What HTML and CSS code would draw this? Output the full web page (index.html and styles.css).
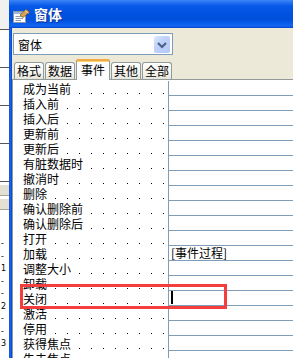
FILE: index.html
```html
<!DOCTYPE html>
<html lang="zh-CN">
<head>
  <meta charset="UTF-8" />
  <meta name="viewport" content="width=device-width, initial-scale=1.0" />
  <title>窗体 属性</title>
  <link rel="stylesheet" href="styles.css">
</head>
<body>
<div class="screen">
  <!-- 后面的设计视图标尺 -->
  <div class="ruler">
    <div class="ruler-top"></div>
    <div class="ruler-band"></div>
    <div class="ruler-band"></div>
    <div class="ruler-band"></div>
    <div class="ruler-band"></div>
    <div class="ruler-section"></div>
    <div class="ruler-section"></div>
    <div class="ruler-ticks">
      <span>-</span><span>-</span><span>1</span><span>-</span><span>-</span>
      <span>2</span><span>-</span><span>-</span><span>3</span>
    </div>
  </div>

  <div class="window">
    <div class="titlebar">
      <svg class="app-icon" width="17" height="14" viewBox="0 0 17 14">
        <rect x="0.5" y="2.5" width="12" height="11" fill="#fff" stroke="#8a97a8"/>
        <rect x="1" y="3" width="11" height="2" fill="#9fb6d8"/>
        <line x1="2.5" y1="7.5" x2="10" y2="7.5" stroke="#8f9aa8"/>
        <line x1="2.5" y1="9.5" x2="10" y2="9.5" stroke="#8f9aa8"/>
        <line x1="2.5" y1="11.5" x2="8" y2="11.5" stroke="#8f9aa8"/>
        <path d="M7 6 L13 0.5 L16.5 3 L10 8.5 Z" fill="#d9a456" stroke="#8a5a1e" stroke-width="0.8"/>
        <path d="M12 1.5 L15.5 4" stroke="#f5d79a" stroke-width="1"/>
      </svg>
      <span class="title">窗体</span>
    </div>

    <div class="body">
      <div class="frame-left"></div>
      <div class="client">
        <div class="combo">
          <span class="combo-text">窗体</span>
          <span class="combo-btn">
            <svg width="16" height="17" viewBox="0 0 16 17">
              <path d="M4 7 L8 11 L12 7" fill="none" stroke="#4d6185" stroke-width="2.2"/>
            </svg>
          </span>
        </div>

        <div class="tabs">
          <div class="tab">格式</div>
          <div class="tab">数据</div>
          <div class="tab active">事件</div>
          <div class="tab">其他</div>
          <div class="tab">全部</div>
        </div>

        <div class="grid" id="grid"></div>
      </div>
    </div>
  </div>
</div>

<script>
  const props = [
    ["成为当前", ""], ["插入前", ""], ["插入后", ""], ["更新前", ""],
    ["更新后", ""], ["有脏数据时", ""], ["撤消时", ""], ["删除", ""],
    ["确认删除前", ""], ["确认删除后", ""], ["打开", ""], ["加载", "[事件过程]"],
    ["调整大小", ""], ["卸载", ""], ["关闭", ""], ["激活", ""],
    ["停用", ""], ["获得焦点", ""], ["失去焦点", ""]
  ];

  const grid = document.getElementById("grid");
  props.forEach(([name, value]) => {
    const row = document.createElement("div");
    row.className = "row";
    row.innerHTML = `<div class="label"><span>${name}</span></div><div class="value">${value}</div>`;
    if (name === "关闭") {
      row.classList.add("current");
      row.querySelector(".value").innerHTML = '<i class="caret"></i>';
      const mark = document.createElement("div");
      mark.className = "highlight";
      row.appendChild(mark);
    }
    grid.appendChild(row);
  });
</script>
</body>
</html>
```

FILE: styles.css
```css
body {
  margin: 0;
  font-family: "Noto Sans CJK SC", "DejaVu Sans", sans-serif;
  font-size: 12px;
  color: #000;
  background: #fff;
}
.screen {
  display: flex;
  width: 293px;
  height: 358px;
  overflow: hidden;
}

/* 左侧标尺 */
.ruler {
  width: 9px;
  flex: none;
  display: flex;
  flex-direction: column;
  background: #fff;
  font-family: "DejaVu Sans", sans-serif;
  font-size: 8px;
  line-height: 1;
}
.ruler-top {
  height: 30px;
  background: #f1f1ef;
  border-bottom: 1px solid #555;
  box-sizing: border-box;
}
.ruler-band {
  height: 38px;
  border-bottom: 1px solid #555;
  box-sizing: border-box;
}
.ruler-section {
  height: 12px;
  margin-top: 2px;
  background: #e4e1d4;
  border-top: 1px solid #fff;
  border-bottom: 1px solid #a8a594;
  box-sizing: border-box;
}
.ruler-ticks {
  display: flex;
  flex-direction: column;
  gap: 4.5px;
  padding-top: 30px;
  padding-left: 1px;
}

/* 窗口 */
.window {
  flex: 1;
  display: flex;
  flex-direction: column;
}
.titlebar {
  height: 28px;
  flex: none;
  display: flex;
  align-items: center;
  padding-left: 4px;
  background: linear-gradient(#3d86f7 0, #1f6ef2 3px, #0758e6 6px, #0052e0 14px, #0050dc 20px, #0a5fee 24px, #1465f0 26px, #0444c9 28px);
}
.app-icon {
  margin-top: 4px;
}
.title {
  margin-left: 4px;
  color: #fff;
  font-weight: bold;
  font-size: 14px;
  text-shadow: 1px 1px 0 #0a2a8a;
}
.body {
  flex: 1;
  display: flex;
}
.frame-left {
  width: 3px;
  background: linear-gradient(to right, #0a3cc8, #1f6ff2 1px, #0b55e4 2px, #0843c8 3px);
}
.client {
  flex: 1;
  background: #ece9d8;
  padding-top: 5px;
}

/* 组合框 */
.combo {
  margin-left: 1px;
  width: 160px;
  height: 22px;
  box-sizing: border-box;
  border: 1px solid #7f9db9;
  background: #fff;
  display: flex;
  align-items: center;
  justify-content: space-between;
  padding: 0 2px 0 4px;
}
.combo-btn {
  width: 16px;
  height: 17px;
  border-radius: 2px;
  background: linear-gradient(135deg, #dfe8fe, #c0d2fa 40%, #b4c8f6);
  display: flex;
}

/* 选项卡 */
.tabs {
  display: flex;
  align-items: flex-end;
  gap: 1px;
  margin-top: 4px;
  padding-left: 2px;
  height: 20px;
  border-bottom: 1px solid #919b9c;
}
.tab {
  height: 16px;
  line-height: 16px;
  padding: 0 2px;
  border: 1px solid #919b9c;
  border-bottom: none;
  border-radius: 3px 3px 0 0;
  background: linear-gradient(#fff, #f2f1ec 70%, #e6e4d8);
}
.tab.active {
  height: 19px;
  line-height: 17px;
  padding: 0 4px;
  margin-bottom: -1px;
  background: #fcfcfe;
  border-top: 2px solid #f3a943;
  box-shadow: inset 0 1px 0 #ffd36b;
  border-radius: 2px 2px 0 0;
}

/* 属性表 */
.grid {
  border-left: 1px solid #919b9c;
  background: #fff;
  padding-top: 1px;
}
.row {
  display: flex;
  height: 15px;
  position: relative;
}
.label {
  width: 155px;
  flex: none;
  border-right: 1px solid #7f9db9;
  background: #fff linear-gradient(to right, transparent 6px, #000 6px, #000 7px, transparent 7px) 0 12px / 12px 1px repeat-x;
  line-height: 15px;
  white-space: nowrap;
}
.label span {
  display: inline-block;
  height: 15px;
  line-height: 15px;
  padding-left: 10px;
  background: #fff;
}
.value {
  flex: 1;
  border-bottom: 1px solid #7f9db9;
  box-sizing: border-box;
  line-height: 14px;
  padding-left: 2px;
  white-space: nowrap;
}
.caret {
  display: inline-block;
  width: 2px;
  height: 13px;
  background: #000;
  vertical-align: top;
}
.highlight {
  position: absolute;
  z-index: 2;
  left: 7px;
  top: -7px;
  width: 207px;
  height: 25px;
  box-sizing: border-box;
  border: 3px solid #f43e3e;
}
```
